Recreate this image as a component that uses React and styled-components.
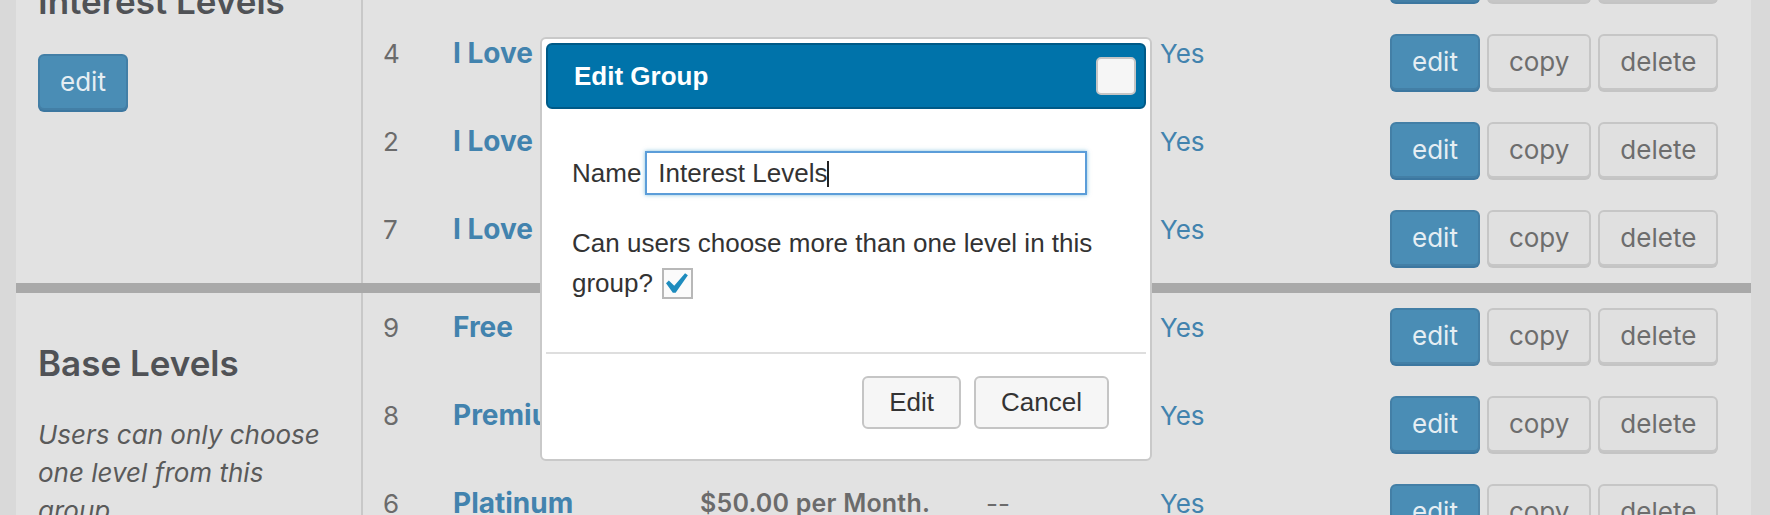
import React, { useEffect, useRef } from 'react';
import styled, { createGlobalStyle } from 'styled-components';

const GlobalStyle = createGlobalStyle`
  html, body {
    margin: 0;
    padding: 0;
  }
  body {
    background: #d9d9d9;
    font-family: Inter, "Noto Sans", sans-serif;
    overflow: hidden;
  }
`;

const Page = styled.div`
  position: relative;
  width: 1770px;
  height: 515px;
  padding: 0 19px 0 16px;
  box-sizing: border-box;
  overflow: hidden;
`;

const LevelsTable = styled.div`
  margin-top: -69px;
  background: #e2e2e2;
`;

const Group = styled.section`
  display: flex;
  border-top: ${props => (props.$first ? 'none' : '10px solid #a9a9a9')};
`;

const GroupInfo = styled.div`
  width: 347px;
  flex-shrink: 0;
  box-sizing: border-box;
  padding: 15px 22px;
  border-right: 2px solid #c8c8c8;
`;

const GroupTitle = styled.h2`
  margin: 33px 0 31px;
  font-size: 35px;
  line-height: 44px;
  font-weight: 600;
  color: #505256;
`;

const GroupNote = styled.p`
  margin: 0 0 26px;
  font-style: italic;
  font-size: 26px;
  line-height: 38px;
  color: #5a5a5a;
`;

const Rows = styled.div`
  flex: 1;
`;

const Row = styled.div`
  display: grid;
  grid-template-columns: 70px 247px 286px 174px 230px 1fr;
  align-items: start;
  height: 88px;
  box-sizing: border-box;
  padding: 15px 0;
`;

const Cell = styled.div`
  padding-left: 20px;
  font-size: 26px;
  line-height: 39px;
  color: #6b6b6b;
  white-space: nowrap;
`;

const LevelName = styled(Cell)`
  font-size: 28px;
  font-weight: 700;
  color: #4283ae;
`;

const Price = styled(Cell)`
  font-size: 25px;
  font-weight: 600;
  letter-spacing: 0.2px;
`;

const Signups = styled(Cell)`
  color: #4283ae;
`;

const Actions = styled.div`
  display: flex;
  gap: 7px;
  padding-left: 20px;
`;

const Button = styled.button`
  height: 56px;
  padding: 0 20px;
  box-sizing: border-box;
  border-radius: 6px;
  font-family: Inter, "Noto Sans", sans-serif;
  font-size: 26px;
  line-height: 1;
  cursor: pointer;
  background: ${props => (props.$primary ? '#4a8db5' : '#e0e0e0')};
  border: 2px solid ${props => (props.$primary ? '#437fa6' : '#c6c6c6')};
  box-shadow: 0 2px 0 ${props => (props.$primary ? '#3c77a0' : '#c4c4c4')};
  color: ${props => (props.$primary ? '#e6eef3' : '#6d6d6d')};
`;

const Dialog = styled.div`
  position: absolute;
  left: 540px;
  top: 37px;
  width: 612px;
  box-sizing: border-box;
  padding: 4px;
  background: #fff;
  border: 2px solid #c9c9c9;
  border-radius: 6px;
  font-family: "Liberation Sans", Arial, sans-serif;
  color: #333;
`;

const DialogHeader = styled.div`
  display: flex;
  align-items: center;
  justify-content: space-between;
  height: 66px;
  box-sizing: border-box;
  padding: 0 8px 0 26px;
  background: #0073aa;
  border: 2px solid #005a87;
  border-radius: 6px;
`;

const DialogTitle = styled.span`
  color: #fff;
  font-size: 26px;
  font-weight: 700;
`;

const CloseButton = styled.button`
  width: 40px;
  height: 38px;
  padding: 0;
  background: #f6f6f6;
  border: 2px solid #c5c5c5;
  border-radius: 5px;
`;

const DialogBody = styled.div`
  padding: 0 26px;
  font-size: 26px;
`;

const Field = styled.label`
  display: flex;
  align-items: center;
  height: 44px;
  margin-top: 42px;
`;

const InputWrap = styled.span`
  position: relative;
  display: inline-flex;
  margin-left: 4px;
`;

const TextInput = styled.input`
  width: 442px;
  height: 44px;
  padding: 0 11px;
  box-sizing: border-box;
  border: 2px solid #5b9dd9;
  box-shadow: 0 0 4px rgba(30, 140, 190, 0.55);
  outline: none;
  font-family: "Liberation Sans", Arial, sans-serif;
  font-size: 26px;
  color: #333;
  caret-color: transparent;
`;

/* text caret drawn over the input, since the screenshot does not catch the blinking one */
const Caret = styled.span`
  position: absolute;
  top: 10px;
  width: 2px;
  height: 26px;
  background: #222;
`;

const Question = styled.p`
  margin: 28px 0 0;
  line-height: 40px;
`;

const CheckBox = styled.span`
  display: inline-flex;
  align-items: center;
  justify-content: center;
  width: 31px;
  height: 31px;
  margin-left: 9px;
  box-sizing: border-box;
  vertical-align: middle;
  position: relative;
  top: -2px;
  background: #fbfbfb;
  border: 2px solid #b8b8b8;
`;

const DialogFooter = styled.div`
  display: flex;
  justify-content: flex-end;
  gap: 13px;
  margin-top: 49px;
  padding: 22px 37px 26px;
  border-top: 2px solid #dedede;
`;

const DialogButton = styled.button`
  height: 53px;
  padding: 0 25px;
  background: #f6f6f6;
  border: 2px solid #c5c5c5;
  border-radius: 6px;
  font-family: "Liberation Sans", Arial, sans-serif;
  font-size: 26px;
  color: #333;
`;

const groups = [
  {
    name: 'Interest Levels',
    levels: [
      { id: 3, name: 'I Love Birds', price: '$5.00 per Month.', expires: '--' },
      { id: 4, name: 'I Love Dogs', price: '$10.00 per Month.', expires: '--' },
      { id: 2, name: 'I Love Cats', price: '$10.00 per Month.', expires: '--' },
      { id: 7, name: 'I Love Fish', price: '$10.00 per Month.', expires: '--' },
    ],
  },
  {
    name: 'Base Levels',
    note: 'Users can only choose one level from this group.',
    levels: [
      { id: 9, name: 'Free', price: 'FREE', expires: '--' },
      { id: 8, name: 'Premium', price: '$20.00 per Month.', expires: '--' },
      { id: 6, name: 'Platinum', price: '$50.00 per Month.', expires: '--' },
    ],
  },
];

const Check = () => (
  <svg width="24" height="22" viewBox="5.3 4.4 11.4 10.3">
    <path d="M14.83 4.89l1.34.94-5.81 8.38H9.02L5.78 9.67l1.34-1.25 2.57 2.4z" fill="#1e8cbe" />
  </svg>
);

const LevelRow = ({ level }) => (
  <Row>
    <Cell>{level.id}</Cell>
    <LevelName>{level.name}</LevelName>
    <Price>{level.price}</Price>
    <Cell>{level.expires}</Cell>
    <Signups>Yes</Signups>
    <Actions>
      <Button $primary>edit</Button>
      <Button>copy</Button>
      <Button>delete</Button>
    </Actions>
  </Row>
);

const EditGroupDialog = () => {
  const inputRef = useRef(null);
  const caretRef = useRef(null);

  useEffect(() => {
    const input = inputRef.current;
    const caret = caretRef.current;
    if (!input || !caret) return;
    const ctx = document.createElement('canvas').getContext('2d');
    ctx.font = '26px "Liberation Sans", Arial, sans-serif';
    caret.style.left = `${13 + ctx.measureText(input.value).width}px`;
  }, []);

  return (
    <Dialog role="dialog">
      <DialogHeader>
        <DialogTitle>Edit Group</DialogTitle>
        <CloseButton aria-label="Close" />
      </DialogHeader>
      <DialogBody>
        <Field>
          Name
          <InputWrap>
            <TextInput ref={inputRef} defaultValue="Interest Levels" />
            <Caret ref={caretRef} />
          </InputWrap>
        </Field>
        <Question>
          Can users choose more than one level in this group?
          <CheckBox>
            <Check />
          </CheckBox>
        </Question>
      </DialogBody>
      <DialogFooter>
        <DialogButton>Edit</DialogButton>
        <DialogButton>Cancel</DialogButton>
      </DialogFooter>
    </Dialog>
  );
};

const App = () => (
  <>
    <GlobalStyle />
    <Page>
      <LevelsTable>
        {groups.map((group, i) => (
          <Group key={group.name} $first={i === 0}>
            <GroupInfo>
              <GroupTitle>{group.name}</GroupTitle>
              {group.note && <GroupNote>{group.note}</GroupNote>}
              <Button $primary>edit</Button>
            </GroupInfo>
            <Rows>
              {group.levels.map(level => (
                <LevelRow key={level.id} level={level} />
              ))}
            </Rows>
          </Group>
        ))}
      </LevelsTable>
      <EditGroupDialog />
    </Page>
  </>
);

export default App;
